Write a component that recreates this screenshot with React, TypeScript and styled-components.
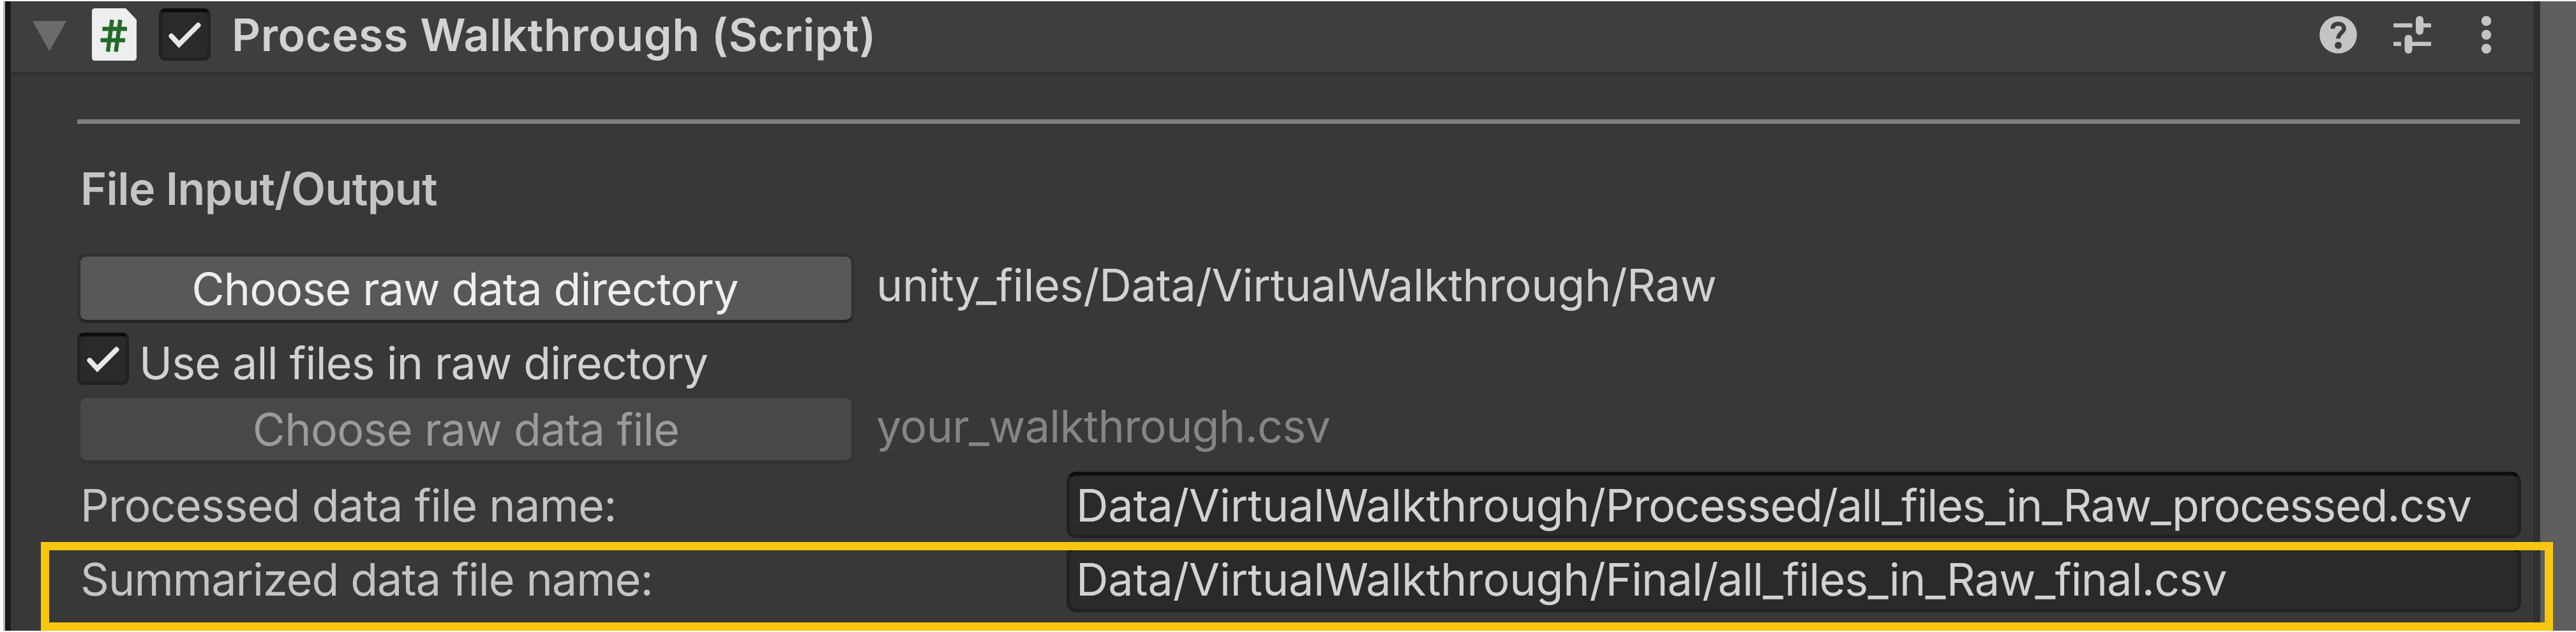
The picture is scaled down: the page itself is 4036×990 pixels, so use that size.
import React from "react";
import styled, { createGlobalStyle } from "styled-components";

const GlobalStyle = createGlobalStyle`
  * { box-sizing: border-box; }
  body { margin: 0; background: #fdfdfd; font-family: Inter, "Liberation Sans", sans-serif; }
  button { font: inherit; }
`;

const Screen = styled.div`
  position: relative;
  display: flex;
  width: 4036px;
  height: 990px;
  padding: 2px 0 2px 5px;
  overflow: hidden;
`;

const Edge = styled.div`
  width: 12px;
  border-left: 3px solid #b9b9b9;
  background: #191919;
`;

const Panel = styled.main`
  display: flex;
  flex-direction: column;
  width: 3952px;
  background: #383838;
`;

const Gutter = styled.div`
  flex: 1;
  border-left: 11px solid #303030;
  background: #5e5e5e;
`;

const Header = styled.header`
  display: flex;
  align-items: flex-start;
  height: 116px;
  padding: 11px 44px 0 34px;
  border-bottom: 5px solid #303030;
  background: #3e3e3e;
`;

const Text = styled.span<{ $track?: number; $bold?: boolean; $color?: string }>`
  font-size: 70px;
  line-height: 84px;
  white-space: pre;
  font-weight: ${(p) => (p.$bold ? 600 : 400)};
  color: ${(p) => p.$color ?? "#c4c4c4"};
  letter-spacing: ${(p) => p.$track ?? 0}px;
`;

const Root = styled.span`
  letter-spacing: -0.16px;
`;

const Title = styled(Text)`
  flex: 1;
  margin-left: 33px;
`;

const Arrow = styled.svg`
  margin: 20px 40px 0 0;
`;

const ScriptBadge = styled.svg`
  margin-right: 35px;
`;

const HeaderIcons = styled.div`
  display: flex;
  gap: 57px;
  padding-top: 12px;
`;

const CheckBox = styled.span`
  flex: none;
  width: 81px;
  height: 82px;
  border: 5px solid #212121;
  border-top: 6px solid #0d0d0d;
  border-radius: 10px;
  background: #2a2a2a;
  svg { display: block; margin: -6px 0 0 -5px; }
`;

const Body = styled.section`
  display: flex;
  flex-direction: column;
  padding: 69px 19px 0 104px;
`;

const Divider = styled.hr`
  width: 3827px;
  height: 7px;
  margin: 0;
  border: 0;
  background: #7f7f7f;
`;

const Heading = styled.h2`
  display: flex;
  height: 84px;
  margin: 60px 0 59px 5px;
`;

const Row = styled.div<{ $height: number; $gap: number }>`
  display: flex;
  height: ${(p) => p.$height}px;
  margin-bottom: ${(p) => p.$gap}px;
`;

const ActionButton = styled.button<{ $off?: boolean }>`
  display: flex;
  align-items: center;
  justify-content: center;
  width: 1216px;
  height: 100%;
  margin: 0 35px 0 1px;
  padding: 2px 0 0;
  border-style: solid;
  border-width: 5px 4px;
  border-color: ${(p) => (p.$off ? "#353535 #363636 #343434" : "#303030 #303030 #242424")};
  border-radius: 14px;
  background: ${(p) => (p.$off ? "#484848" : "#585858")};
`;

const ButtonLabel = styled(Text)<{ $inset?: number }>`
  margin-right: ${(p) => p.$inset ?? 0}px;
`;

const Value = styled(Text)`
  margin-top: 8px;
`;

const ToggleLabel = styled(Text)`
  margin: 6px 0 0 16px;
`;

const FieldLabel = styled(Text)`
  width: 1545px;
  margin: 11px 0 0 5px;
`;

const Field = styled.div`
  display: flex;
  align-items: center;
  width: 2279px;
  padding: 1px 0 0 10px;
  border: 5px solid #212121;
  border-top: 6px solid #0d0d0d;
  border-radius: 15px;
  background: #2a2a2a;
`;

const Highlight = styled.div`
  position: absolute;
  left: 64px;
  top: 849px;
  width: 3936px;
  height: 139px;
  border: 13px solid #f9c70f;
`;

const Check = () => (
  <CheckBox>
    <svg width="81" height="82" fill="none">
      <path d="M19.5 43.5 31.5 56.5 61.5 26.5" stroke="#e8e8e8" strokeWidth="8" strokeLinecap="round" />
    </svg>
  </CheckBox>
);

export default function App() {
  return (
    <>
      <GlobalStyle />
      <Screen>
        <Edge />
        <Panel>
          <Header>
            <Arrow width="53" height="48">
              <path d="M0 0H53L26.5 47Z" fill="#6b6b6b" />
            </Arrow>
            <ScriptBadge width="70" height="82">
              <path d="M5 0H53L70 18V77Q70 82 65 82H5Q0 82 0 77V5Q0 0 5 0Z" fill="#eee" />
              <path
                d="M31.5 18 25 68M44.5 18 37.5 68M16.5 32.3H55M13.5 50H52"
                fill="none"
                stroke="#226b28"
                strokeWidth="6.5"
              />
            </ScriptBadge>
            <Check />
            <Title $bold $color="#d2d2d2" $track={0.57}>Process Walkthrough (Script)</Title>
            <HeaderIcons>
              <svg width="59" height="59">
                <circle cx="29.5" cy="29.5" r="29.3" fill="#c4c4c4" />
                <path
                  d="M20.500 20C21 14.500 24.500 12.300 29.500 12.300C35 12.300 38.500 15.500 38.500 20C38.500 26 29.500 26.500 29.500 35.500"
                  fill="none"
                  stroke="#3e3e3e"
                  strokeWidth="6.5"
                />
                <circle cx="29.5" cy="46" r="5.5" fill="#3e3e3e" />
              </svg>
              <svg width="59" height="59" fill="#c4c4c4">
                <rect x="0" y="11.5" width="29.5" height="6.5" rx="1" />
                <rect x="44" y="11.5" width="15" height="6.5" rx="1" />
                <rect x="35" y="0" width="12" height="29.5" rx="6" />
                <rect x="0" y="40.5" width="12" height="6.5" rx="1" />
                <rect x="27" y="40.5" width="32" height="6.5" rx="1" />
                <rect x="17.5" y="29.5" width="12" height="29.5" rx="6" />
              </svg>
              <svg width="59" height="59" fill="#c4c4c4">
                <circle cx="29.5" cy="7.7" r="7.7" />
                <circle cx="29.5" cy="29.5" r="7.7" />
                <circle cx="29.5" cy="51.3" r="7.7" />
              </svg>
            </HeaderIcons>
          </Header>
          <Body>
            <Divider />
            <Heading>
              <Text $bold $track={-0.6}>File Input/Output</Text>
            </Heading>
            <Row $height={109} $gap={15}>
              <ActionButton>
                <ButtonLabel $color="#eee" $track={-0.86} $inset={3}>Choose raw data directory</ButtonLabel>
              </ActionButton>
              <Value $color="#d2d2d2" $track={-0.27}>unity_files/Data/VirtualWalkthrough/Raw</Value>
            </Row>
            <Row $height={82} $gap={15}>
              <Check />
              <ToggleLabel $color="#d2d2d2" $track={-0.86}>Use all files in raw directory</ToggleLabel>
            </Row>
            <Row $height={108} $gap={13}>
              <ActionButton $off disabled>
                <ButtonLabel $color="#9b9b9b" $track={-0.65}>Choose raw data file</ButtonLabel>
              </ActionButton>
              <Value $color="#858585" $track={-0.7}>your_walkthrough.csv</Value>
            </Row>
            <Row $height={104} $gap={12}>
              <FieldLabel $track={-0.72}>Processed data file name:</FieldLabel>
              <Field>
                <Text $color="#d2d2d2" $track={-1.23}>
                  <Root>Data/VirtualWalkthrough/</Root>Processed/all_files_in_Raw_processed.csv
                </Text>
              </Field>
            </Row>
            <Row $height={104} $gap={0}>
              <FieldLabel $track={-0.95}>Summarized data file name:</FieldLabel>
              <Field>
                <Text $color="#d2d2d2" $track={-0.86}>
                  <Root>Data/VirtualWalkthrough/</Root>Final/all_files_in_Raw_final.csv
                </Text>
              </Field>
            </Row>
          </Body>
        </Panel>
        <Gutter />
        <Highlight />
      </Screen>
    </>
  );
}
